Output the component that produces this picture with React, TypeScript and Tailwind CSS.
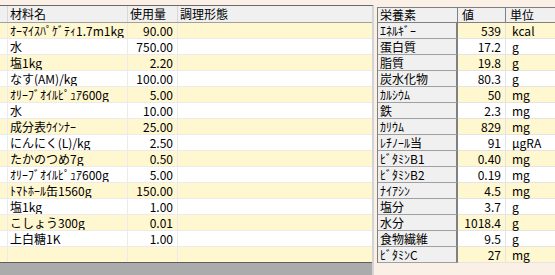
const font = { fontFamily: '"MS UI Gothic", "Noto Sans CJK JP", sans-serif' }

const materials: [string, string][] = [
  ['ｵｰﾏｲｽﾊﾟｹﾞﾃｨ1.7m1kg', '90.00'],
  ['水', '750.00'],
  ['塩1kg', '2.20'],
  ['なす(AM)/kg', '100.00'],
  ['ｵﾘｰﾌﾞｵｲﾙﾋﾟｭｱ600g', '5.00'],
  ['水', '10.00'],
  ['成分表ｳｲﾝﾅｰ', '25.00'],
  ['にんにく(L)/kg', '2.50'],
  ['たかのつめ7g', '0.50'],
  ['ｵﾘｰﾌﾞｵｲﾙﾋﾟｭｱ600g', '5.00'],
  ['ﾄﾏﾄﾎｰﾙ缶1560g', '150.00'],
  ['塩1kg', '1.00'],
  ['こしょう300g', '0.01'],
  ['上白糖1K', '1.00'],
  ['', ''],
]

const nutrients: [string, string, string][] = [
  ['ｴﾈﾙｷﾞｰ', '539', 'kcal'],
  ['蛋白質', '17.2', 'g'],
  ['脂質', '19.8', 'g'],
  ['炭水化物', '80.3', 'g'],
  ['ｶﾙｼｳﾑ', '50', 'mg'],
  ['鉄', '2.3', 'mg'],
  ['ｶﾘｳﾑ', '829', 'mg'],
  ['ﾚﾁﾉｰﾙ当', '91', 'μgRA'],
  ['ﾋﾞﾀﾐﾝB1', '0.40', 'mg'],
  ['ﾋﾞﾀﾐﾝB2', '0.19', 'mg'],
  ['ﾅｲｱｼﾝ', '4.5', 'mg'],
  ['塩分', '3.7', 'g'],
  ['水分', '1018.4', 'g'],
  ['食物繊維', '9.5', 'g'],
  ['ﾋﾞﾀﾐﾝC', '27', 'mg'],
]

export default function App() {
  return (
    <div
      className="w-[555px] h-[275px] overflow-hidden bg-[#faf0e6] flex text-[12px] text-black"
      style={font}
    >
      {/* Materials grid */}
      <div className="w-[374px] h-[270px] mt-[5px] flex flex-col border-t border-[#6a6a6a] border-r-2 border-r-[#d4d4d4] bg-[#ababab]">
        <div className="flex h-[17px] bg-[#f0f0f0] border-b border-[#a0a0a0] leading-[16px] shrink-0">
          <div className="w-[8px] border-r border-[#d8d8d8]" />
          <div className="w-[120px] pl-[2px] border-r border-[#d8d8d8]">材料名</div>
          <div className="w-[50px] pl-[2px] border-r border-[#d8d8d8]">使用量</div>
          <div className="flex-1 pl-[2px]">調理形態</div>
        </div>
        {materials.map(([name, qty], i) => (
          <div
            key={i}
            className={`flex h-[16px] shrink-0 leading-[15px] ${
              i === materials.length - 1 ? 'border-b border-[#5e5e5e]' : 'border-b border-[#ebebeb]'
            } ${i % 2 === 0 ? 'bg-[#fff7cf]' : 'bg-white'}`}
          >
            <div className="w-[8px] border-r border-[#ebebeb]" />
            <div className="w-[120px] pl-[2px] border-r border-[#ebebeb] whitespace-nowrap overflow-hidden">{name}</div>
            <div className="w-[50px] pr-[4px] text-right border-r border-[#ebebeb]">{qty}</div>
            <div className="flex-1" />
          </div>
        ))}
      </div>

      {/* Nutrients grid */}
      <div className="ml-[3px] flex-1 mt-[7px] self-start flex flex-col border-t border-l border-[#808080]">
        <div className="flex h-[15px] bg-[#f0f0f0] border-b border-[#808080] leading-[14px]">
          <div className="w-[80px] pl-[2px] border-r border-[#808080]">栄養素</div>
          <div className="w-[48px] pl-[4px] border-r border-[#808080]">値</div>
          <div className="flex-1 pl-[4px]">単位</div>
        </div>
        {nutrients.map(([name, val, unit], i) => (
          <div key={i} className="flex h-[16px] leading-[15px]">
            <div className="w-[80px] pl-[2px] bg-[#f0f0f0] border-r-2 border-[#808080] border-b border-b-[#a0a0a0] whitespace-nowrap">
              {name}
            </div>
            <div
              className={`w-[48px] pr-[4px] text-right border-r border-b border-[#e4e4e4] ${
                i % 2 === 0 ? 'bg-[#fff7cf]' : 'bg-white'
              }`}
            >
              {val}
            </div>
            <div
              className={`flex-1 pl-[6px] border-b border-[#e4e4e4] ${
                i % 2 === 0 ? 'bg-[#fff7cf]' : 'bg-white'
              }`}
            >
              {unit}
            </div>
          </div>
        ))}
      </div>
    </div>
  )
}
